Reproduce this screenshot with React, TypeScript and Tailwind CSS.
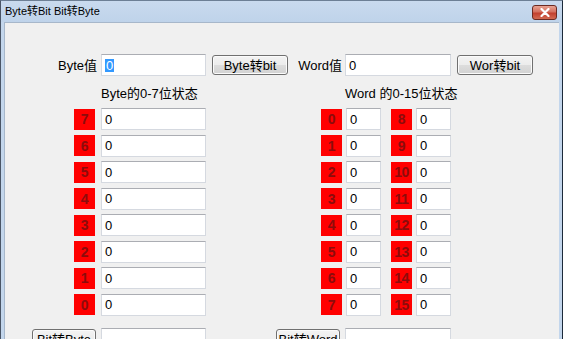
import React from "react";

const FONT = "font-['Liberation_Sans','Noto_Sans_CJK_SC',sans-serif]";

function Field({
  className,
  value,
  selected,
}: {
  className: string;
  value?: string;
  selected?: boolean;
}) {
  return (
    <div
      className={
        "flex h-[22px] shrink-0 items-center border border-[#d5d9e0] border-t-[#abadb3] bg-white pl-[3px] text-[13px] leading-none text-black " +
        className
      }
    >
      {value !== undefined ? (
        <span className={selected ? "bg-[#3399ff] px-[1px] text-white" : ""}>
          {value}
        </span>
      ) : null}
    </div>
  );
}

function WinButton({ className, children }: { className: string; children: React.ReactNode }) {
  return (
    <button
      type="button"
      className={
        "flex h-[20px] shrink-0 items-center justify-center rounded-[3px] border border-[#707070] bg-[linear-gradient(#f3f3f3_0%,#ececec_50%,#dddddd_50%,#d2d2d2_100%)] text-[13px] leading-none text-black shadow-[inset_0_0_0_1px_#fbfbfb] " +
        className
      }
    >
      {children}
    </button>
  );
}

function Bit({ n }: { n: number }) {
  return (
    <div className="flex h-[21px] w-[21px] shrink-0 items-center justify-center bg-[#ff0000] text-[14px] font-bold leading-none tracking-[-0.5px] text-[#8c0c0c]">
      {n}
    </div>
  );
}

export default function App() {
  const byteBits = [7, 6, 5, 4, 3, 2, 1, 0];
  return (
    <div
      className={
        "flex h-[339px] w-[563px] flex-col overflow-hidden border-l border-r border-t border-l-[#4a5566] border-r-[#1c2a3a] border-t-[#6d7f95] bg-[#c3d6ec] " +
        FONT
      }
    >
      {/* title bar */}
      <div className="flex h-[21px] shrink-0 items-center justify-between bg-[linear-gradient(#c9daee,#bfd3ea)] pl-[4px] pr-[5px]">
        <span className="text-[11px] leading-none text-black">Byte转Bit Bit转Byte</span>
        <div className="mt-[1px] flex h-[15px] w-[25px] items-center justify-center rounded-[3px] border border-[#6b2a22] bg-[linear-gradient(#e8a393_0%,#d4705f_45%,#c2402f_55%,#d26a52_100%)]">
          <svg viewBox="0 0 10 9" className="h-[9px] w-[10px]">
            <path d="M1.5 1 L8.5 8 M8.5 1 L1.5 8" stroke="#ffffff" strokeWidth="2.2" strokeLinecap="round" />
          </svg>
        </div>
      </div>

      {/* client area */}
      <div className="ml-[3px] mr-[3px] flex flex-1 flex-col border-l border-t border-l-[#a7b7ca] border-t-[#a7b7ca] bg-[#f0f0f0] text-[13px] text-black">
        {/* value row */}
        <div className="flex items-center pl-[45px] pt-[31px]">
          <span className="w-[47px] text-right leading-none">Byte值</span>
          <Field className="ml-[4px] h-[21px] w-[105px]" value="0" selected />
          <WinButton className="ml-[6px] w-[76px]">Byte转bit</WinButton>
          <span className="ml-[7px] w-[47px] text-right leading-none">Word值</span>
          <Field className="ml-[3px] h-[21px] w-[106px]" value="0" />
          <WinButton className="ml-[6px] w-[76px]">Wor转bit</WinButton>
        </div>

        {/* headers */}
        <div className="mt-[10px] flex pl-[96px] leading-[16px]">
          <span className="w-[244px]">Byte的0-7位状态</span>
          <span>Word 的0-15位状态</span>
        </div>

        {/* bit rows */}
        <div className="mt-[6px] flex flex-col gap-[4.57px] pl-[69px]">
          {byteBits.map((b, i) => (
            <div key={b} className="flex h-[22px] items-center">
              <Bit n={b} />
              <Field className="ml-[6px] w-[105px]" value="0" />
              <div className="ml-[115px] flex items-center">
                <Bit n={i} />
                <Field className="ml-[4px] w-[35px]" value="0" />
              </div>
              <div className="ml-[10px] flex items-center">
                <Bit n={i + 8} />
                <Field className="ml-[4px] w-[35px]" value="0" />
              </div>
            </div>
          ))}
        </div>

        {/* bottom row */}
        <div className="mt-[12px] flex items-start pl-[27px]">
          <WinButton className="mt-[1px] h-[22px] w-[64px]">Bit转Byte</WinButton>
          <Field className="ml-[5px] w-[105px]" />
          <WinButton className="ml-[70px] mt-[1px] h-[22px] w-[64px]">Bit转Word</WinButton>
          <Field className="ml-[5px] w-[106px]" />
        </div>
      </div>
    </div>
  );
}
